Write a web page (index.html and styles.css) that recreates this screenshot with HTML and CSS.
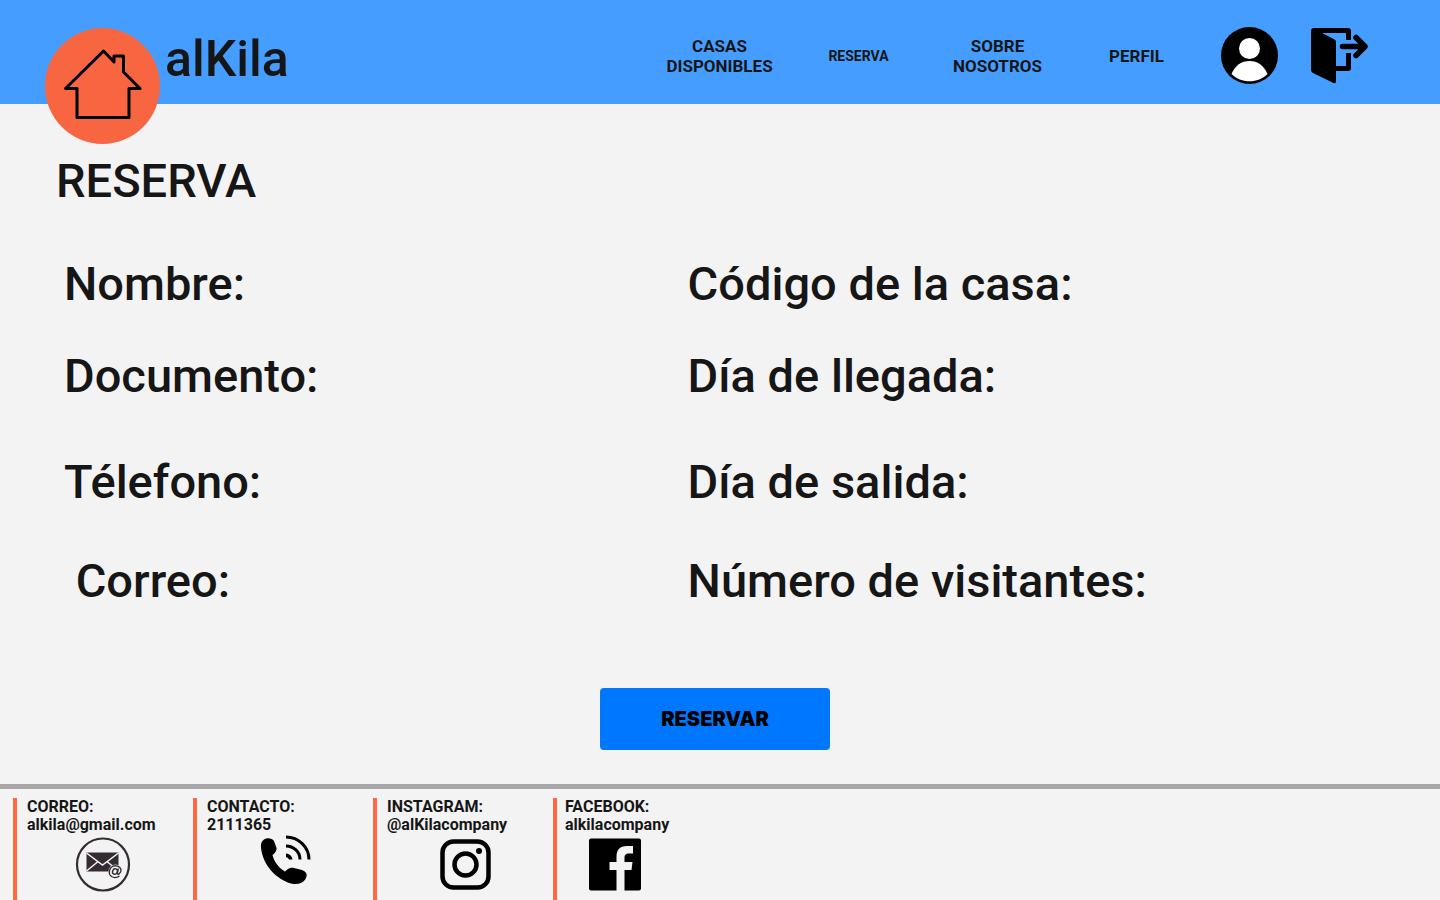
FILE: index.html
```html
<!DOCTYPE html>
<html lang="es">
<head>
<meta charset="utf-8">
<meta name="viewport" content="width=device-width, initial-scale=1">
<title>alKila - Reserva</title>
<link rel="stylesheet" href="styles.css">
</head>
<body>
<header class="header">
  <a class="brand" href="#">
    <span class="brand-badge">
      <svg class="brand-icon" viewBox="0 0 80 72" fill="none" stroke="#000" stroke-width="3" stroke-linejoin="round" aria-hidden="true">
        <path d="M40.500 1 2.500 38.500H14V67.500H66V38.500H77L60.500 22V6H51V12Z"/>
      </svg>
    </span>
    <span class="brand-name">alKila</span>
  </a>
  <nav class="nav">
    <div class="nav-links">
      <a class="nav-link" href="#">CASAS DISPONIBLES</a>
      <a class="nav-link nav-link-current" href="#">RESERVA</a>
      <a class="nav-link" href="#">SOBRE NOSOTROS</a>
      <a class="nav-link" href="#">PERFIL</a>
    </div>
    <div class="nav-actions">
      <a class="nav-action" href="#" aria-label="Mi perfil">
        <svg viewBox="0 0 57 57" aria-hidden="true">
          <circle cx="28.500" cy="28.500" r="28.500"/>
          <circle cx="28.500" cy="21.500" r="10.500" fill="#fff"/>
          <path d="M10.500 47C14 38.500 20.500 34 28.500 34S43 38.500 46.500 47C41.500 52 35.500 54.300 28.500 54.300S15.500 52 10.500 47Z" fill="#fff"/>
        </svg>
      </a>
      <a class="nav-action" href="#" aria-label="Salir">
        <svg viewBox="0 0 57 57" aria-hidden="true">
          <path d="M3 1H37Q40 1 40 4V13H35V6H11L23.500 12.500Q25 13.300 25 15V54.500Q25 57 22.500 56L2 46Q0 45 0 43V4Q0 1 3 1Z"/>
          <path d="M24 39H35V26H40V41Q40 44 37 44H24Z"/>
          <path d="M31.500 19.500H52M45 10.500 54 19.500 45 28.500" fill="none" stroke="#000" stroke-width="5.500" stroke-linecap="round" stroke-linejoin="round"/>
        </svg>
      </a>
    </div>
  </nav>
</header>

<main class="main">
  <h1 class="title">RESERVA</h1>
  <form class="form">
    <div class="fields">
      <div class="field"><label for="nombre">Nombre:</label><input id="nombre" type="text"></div>
      <div class="field"><label for="codigo">Código de la casa:</label><input id="codigo" type="text"></div>
      <div class="field"><label for="documento">Documento:</label><input id="documento" type="text"></div>
      <div class="field"><label for="llegada">Día de llegada:</label><input id="llegada" type="text"></div>
      <div class="field"><label for="telefono">Télefono:</label><input id="telefono" type="text"></div>
      <div class="field"><label for="salida">Día de salida:</label><input id="salida" type="text"></div>
      <div class="field"><label for="correo">&nbsp;Correo:</label><input id="correo" type="text"></div>
      <div class="field"><label for="visitantes">Número de visitantes:</label><input id="visitantes" type="text"></div>
    </div>
    <button class="submit" type="button">RESERVAR</button>
  </form>
</main>

<footer class="footer">
  <section class="contact">
    <p class="contact-text">CORREO:<br>alkila@gmail.com</p>
    <svg class="contact-icon" viewBox="2 0 56 56" aria-hidden="true">
      <circle cx="28" cy="27.500" r="26" fill="none" stroke="#352c33" stroke-width="2.200"/>
      <rect x="11.500" y="15.500" width="32" height="19" fill="#352c33"/>
      <path d="M11.500 16 27.500 28 43.500 16M11.500 34 22.500 25M43.500 34 32.500 25" fill="none" stroke="#f3f3f3" stroke-width="1.500"/>
      <circle cx="40.500" cy="34.500" r="7" fill="#f3f3f3"/>
      <g fill="none" stroke="#352c33" stroke-width="1.400">
        <ellipse cx="40" cy="34.500" rx="2.400" ry="2.800" transform="rotate(20 40 34.500)"/>
        <path d="M43.300 31.500 42.400 36Q42.500 37.700 44 37Q46.500 35 46 32.500C45 29 41 28 38 29.200C34.500 30.700 33.500 35 35 38C37 41.300 41.500 41.300 44.500 39"/>
      </g>
    </svg>
  </section>
  <section class="contact">
    <p class="contact-text">CONTACTO:<br>2111365</p>
    <svg class="contact-icon" viewBox="-1 2 56 56" aria-hidden="true">
      <path d="M6 4.500C9 2.500 14 3 16 6L18.500 13C19 16 16 19 14.500 20C16 27 21 33 27 36.500C30 33 33 32 36 33L44 35C48.500 36.500 50 40 47.500 44C45 48.500 39 50 33 48.500C19 44.500 5 31 3 13C2.600 9 3.500 6 6 4.500Z"/>
      <path d="M28 2A23 22.500 0 0 1 51 24.500M28 11A14 13.500 0 0 1 42 24.500" fill="none" stroke="#000" stroke-width="3"/>
      <path d="M28 18.500A6.500 6.500 0 0 1 34.500 24.500H31Q30.500 22.500 28 22Z"/>
    </svg>
  </section>
  <section class="contact">
    <p class="contact-text">INSTAGRAM:<br>@alKilacompany</p>
    <svg class="contact-icon" viewBox="-1 0 56 56" fill="none" stroke="#000" aria-hidden="true">
      <rect x="4.500" y="4.500" width="46" height="46" rx="11" stroke-width="4.500"/>
      <circle cx="27.500" cy="27.500" r="11" stroke-width="4.500"/>
      <circle cx="41" cy="14" r="3" fill="#000" stroke="none"/>
    </svg>
  </section>
  <section class="contact contact-compact">
    <p class="contact-text">FACEBOOK:<br>alkilacompany</p>
    <svg class="contact-icon" viewBox="0 0 56 56" aria-hidden="true">
      <rect x="2" y="1.500" width="52" height="52" rx="2"/>
      <path d="M29.500 54V33H22.500V25H29.500V20C29.500 12.500 33 9 39.500 9H46V16.500H42C38.500 16.500 37.500 18 37.500 21V25H45.500L44.500 33H37.500V54Z" fill="#f3f3f3"/>
    </svg>
  </section>
</footer>
</body>
</html>
```
FILE: styles.css
```css
* {
  box-sizing: border-box;
}

body {
  margin: 0;
  min-height: 100vh;
  display: flex;
  flex-direction: column;
  background: #f3f3f3;
  color: #161616;
  font-family: Roboto, "Noto Sans", sans-serif;
}

a {
  color: inherit;
  text-decoration: none;
}

svg {
  display: block;
  overflow: visible;
}

.header {
  display: flex;
  justify-content: space-between;
  align-items: flex-start;
  height: 104px;
  padding: 0 72px 0 45px;
  background: #459eff;
}

.brand {
  display: flex;
  gap: 5px;
  padding-top: 28px;
}

.brand-badge {
  display: flex;
  align-items: center;
  justify-content: center;
  width: 115px;
  height: 116px;
  border-radius: 50%;
  background: #f86541;
}

.brand-icon {
  width: 80px;
  height: 72px;
}

.brand-name {
  font-size: 50px;
  font-weight: 500;
  line-height: 62px;
}

.nav {
  display: flex;
  align-items: center;
  gap: 15px;
  padding-top: 27px;
}

.nav-links {
  display: grid;
  grid-template-columns: repeat(4, 139px);
  align-items: center;
}

.nav-link {
  padding: 0 12px;
  font-size: 17px;
  font-weight: 700;
  line-height: 20px;
  text-align: center;
}

.nav-link-current {
  font-size: 14px;
}

.nav-actions {
  display: flex;
  gap: 33px;
}

.nav-action {
  width: 57px;
}

.main {
  padding-top: 47px;
}

.title {
  margin: 0 0 43px;
  padding-left: 56px;
  font-size: 47px;
  font-weight: 500;
  line-height: 60px;
}

.form {
  padding: 0 10px 34px 0;
}

.fields {
  display: grid;
  grid-template-columns: minmax(0, 21fr) minmax(0, 25fr);
  grid-template-rows: 92px 106px 99px 60px;
  padding-left: 64px;
}

.field {
  display: flex;
  align-items: flex-start;
  font-size: 47px;
  font-weight: 500;
  line-height: 60px;
}

.field label {
  white-space: nowrap;
}

.field input {
  flex: 1;
  width: 0;
  min-width: 0;
  height: 60px;
  border: 0;
  padding: 0 12px;
  background: transparent;
  color: inherit;
  font: inherit;
}

.submit {
  display: block;
  width: 230px;
  height: 62px;
  margin: 77px auto 0;
  border: 0;
  border-radius: 4px;
  background: #0077ff;
  color: #000;
  font-family: Inter, Roboto, sans-serif;
  font-size: 20px;
  font-weight: 900;
}

.footer {
  flex: 1;
  display: flex;
  padding: 9px 13px 0;
  border-top: 5px solid #a6a6a6;
}

.contact {
  width: 180px;
  padding: 0 10px;
  border-left: 4px solid #ff6740;
}

.contact-compact {
  width: 123px;
  padding: 0 12px 0 8px;
}

.contact-text {
  margin: 0;
  font-size: 16px;
  font-weight: 700;
  line-height: 18px;
  white-space: nowrap;
}

.contact-icon {
  width: 56px;
  height: 56px;
  margin: 3px auto 0;
}
```
